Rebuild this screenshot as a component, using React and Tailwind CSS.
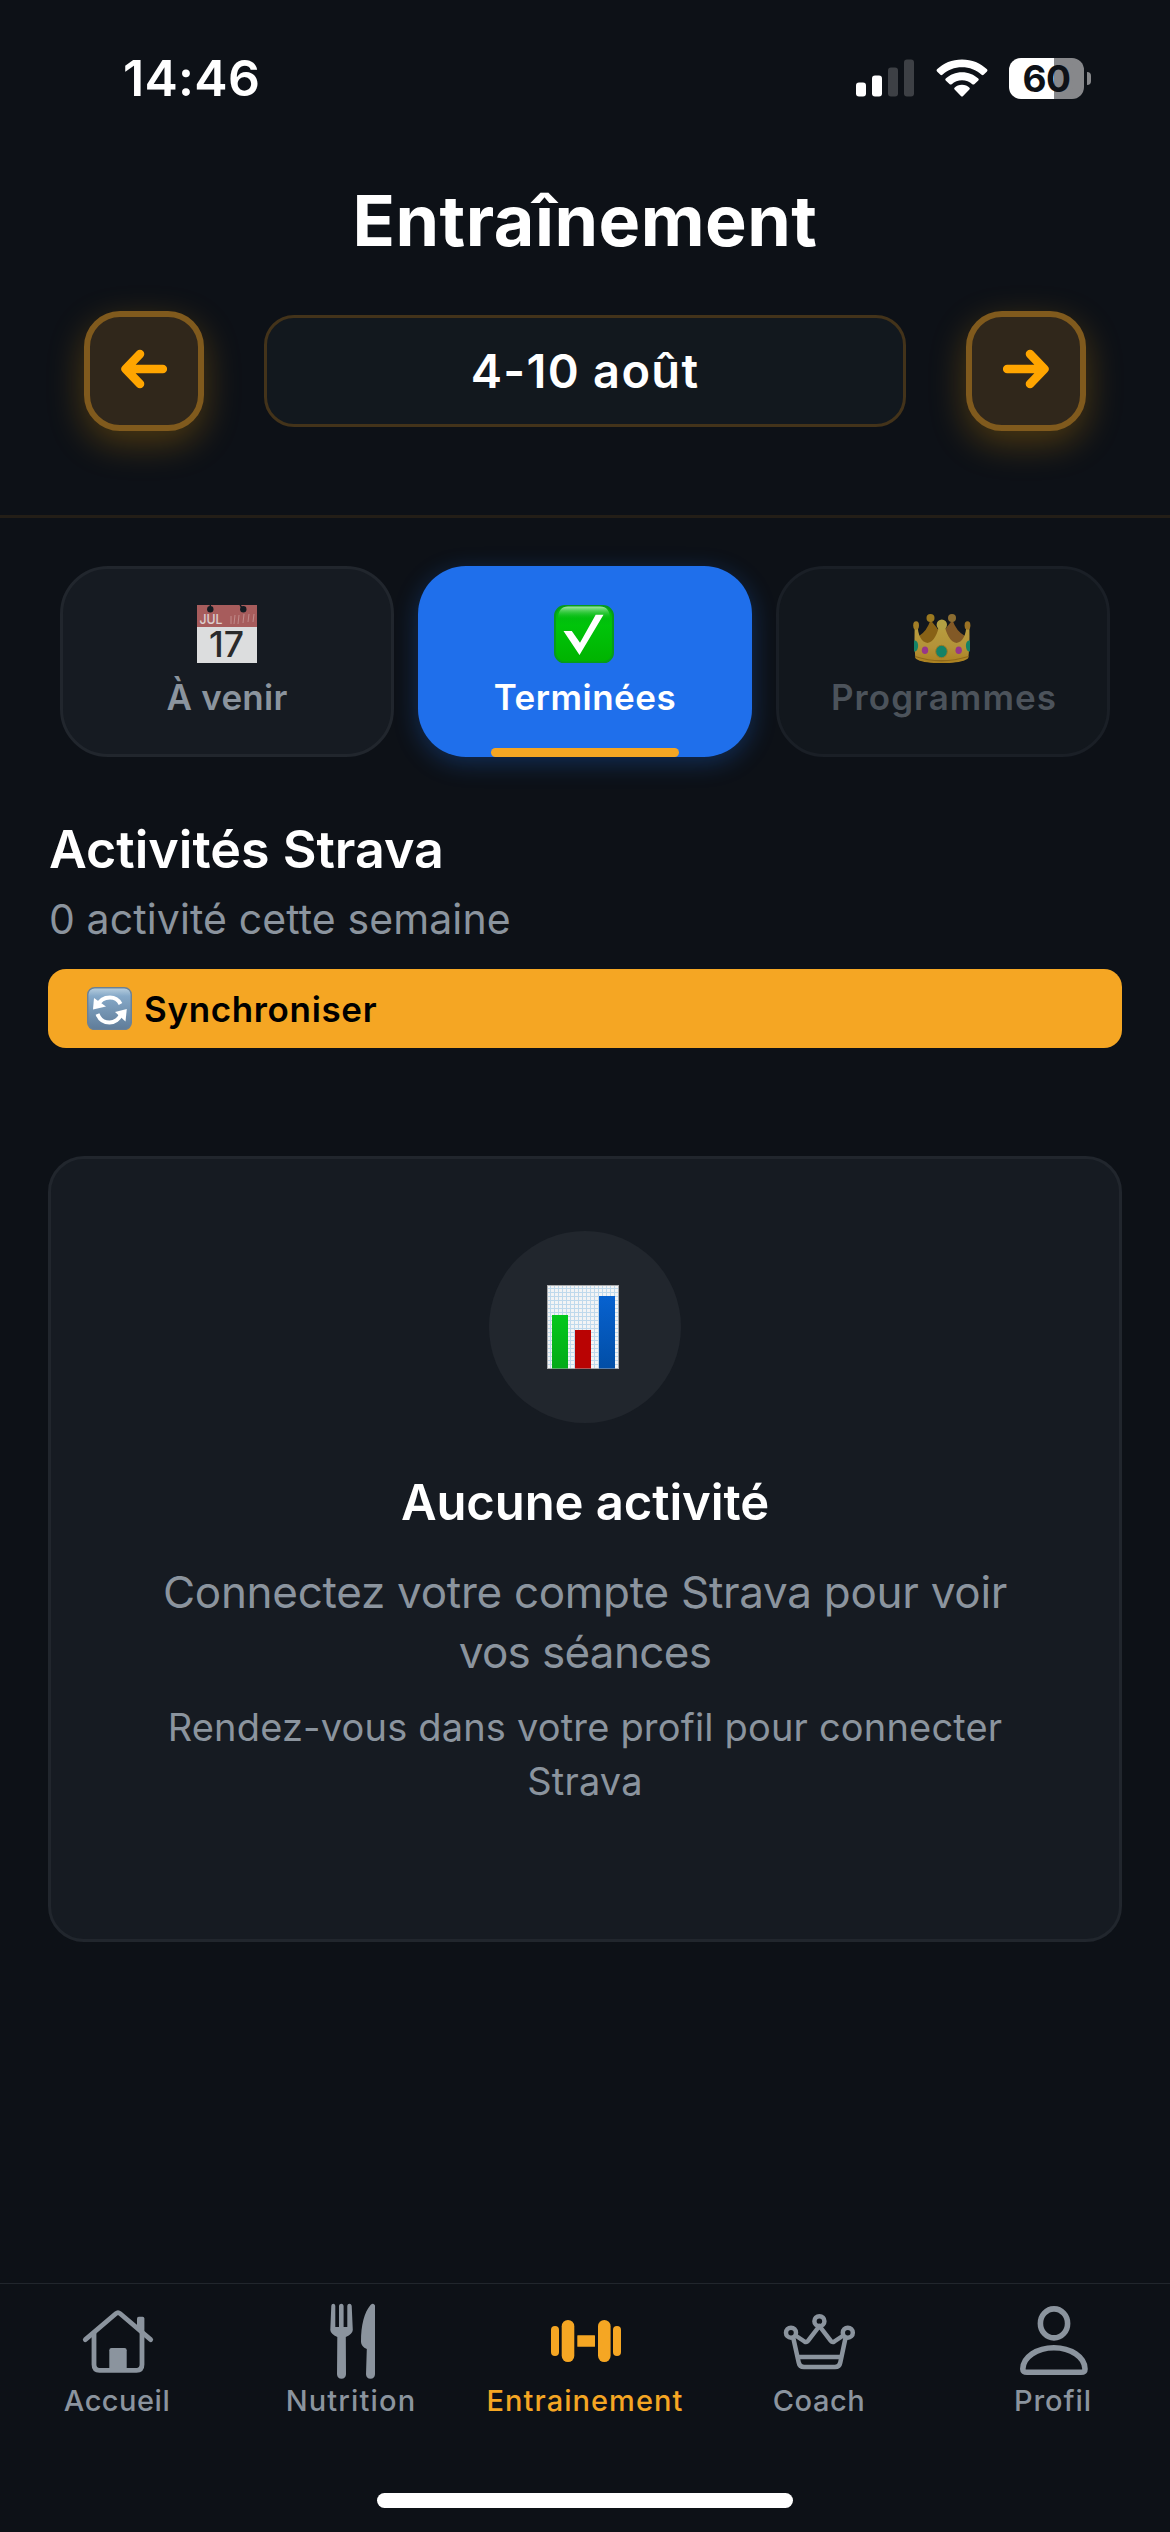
import React from "react";

function SignalIcon() {
  return (
    <svg width="58" height="38" viewBox="0 0 58 38">
      <rect x="0" y="23.5" width="10" height="14" rx="3" fill="#fff" />
      <rect x="16" y="16.5" width="10" height="21" rx="3" fill="#fff" />
      <rect x="32" y="8.5" width="10" height="29" rx="3" fill="#3d4045" />
      <rect x="48" y="0.5" width="10" height="37" rx="3" fill="#3d4045" />
    </svg>
  );
}

function WifiIcon() {
  return (
    <svg width="52" height="38" viewBox="0 0 52 38" fill="#fff">
      <path d="M26 0.5C36 0.5 44.700 4.200 51 10.300Q52 11.400 51 12.400L47.600 15.800Q46.600 16.600 45.600 15.700C40.300 10.900 33.500 8.300 26 8.300S11.700 10.900 6.400 15.700Q5.400 16.600 4.400 15.800L1 12.400Q0 11.400 1 10.300C7.300 4.200 16 0.500 26 0.500Z" />
      <path d="M26 13.200C32.300 13.200 38 15.600 42.300 19.500Q43.300 20.500 42.300 21.500L38.300 25.200Q37.300 26 36.300 25.200C33.500 22.700 30 21.200 26 21.200S18.500 22.700 15.700 25.200Q14.700 26 13.700 25.200L9.700 21.500Q8.700 20.500 9.700 19.500C14 15.600 19.700 13.200 26 13.200Z" />
      <path d="M26 25.800C29 25.800 31.700 27 33.500 28.700Q34.300 29.600 33.400 30.500L27.100 37Q26 38 24.900 37L18.600 30.500Q17.700 29.600 18.500 28.700C20.300 27 23 25.800 26 25.800Z" />
    </svg>
  );
}

function ArrowIcon({ flip }) {
  return (
    <svg width="46" height="40" viewBox="0 0 46 40" className={flip ? "-scale-x-100 -mt-1" : "-mt-1"} fill="none" stroke="#ffa500" strokeWidth="8.600" strokeLinecap="round" strokeLinejoin="round">
      <path d="M4.800 20H41.800M19 5L4.600 20L19 35" />
      <path d="M5 20L10 16V24Z" strokeWidth="4" fill="#ffa500" />
    </svg>
  );
}

function CalendarEmoji() {
  return (
    <svg width="60" height="58" viewBox="0 0 60 58" className="overflow-visible opacity-[0.88]">
      <rect width="60" height="58" fill="#f8f8f8" />
      <rect width="60" height="22" fill="#bc6665" />
      <path d="M13.300 0V4M43 0L46 4" stroke="#141c22" strokeWidth="1.400" />
      <circle cx="13.300" cy="4.300" r="3.200" fill="#141c22" />
      <circle cx="46.300" cy="4.300" r="3.200" fill="#141c22" />
      <path d="M34 11V19M38 10L37 19M42 10L41 19M47 9L46 18M52 9L51 17M57 9L56 17" stroke="#d99b9a" strokeWidth="1" />
      <text x="2.500" y="18.800" fontSize="13.500" fontWeight="500" fontFamily="Inter, sans-serif" fill="#f8e9e9" textLength="23" lengthAdjust="spacingAndGlyphs">JUL</text>
      <text x="12" y="52" fontSize="35" fontWeight="500" fontFamily="Inter, sans-serif" fill="#2d2d2d" textLength="35" lengthAdjust="spacingAndGlyphs">17</text>
    </svg>
  );
}

function CheckEmoji() {
  return (
    <svg width="60" height="58" viewBox="0 0 60 58" className="-ml-[3px]">
      <defs>
        <linearGradient id="checkBody" x2="0" y2="1">
          <stop offset="0" stopColor="#04b313" />
          <stop offset="0.350" stopColor="#00c40a" />
          <stop offset="1" stopColor="#00b300" />
        </linearGradient>
        <linearGradient id="checkShine" x2="0" y2="1">
          <stop offset="0" stopColor="#a1e8a6" />
          <stop offset="1" stopColor="#14c71e" stopOpacity="0" />
        </linearGradient>
      </defs>
      <rect x="1" y="1" width="58" height="56.500" rx="10" fill="url(#checkBody)" stroke="#079b1b" strokeWidth="2" />
      <path d="M4 14Q4 1.500 14 1.500H46Q56 1.500 56 14Z" fill="url(#checkShine)" />
      <path d="M9.500 26H17.800L26 37.800L41.700 9.700H49.500L25.500 50Z" fill="#fff" />
    </svg>
  );
}

function CrownEmoji() {
  return (
    <svg width="58" height="58" viewBox="0 0 58 58" className="-ml-[2px]">
      <defs>
        <linearGradient id="crownGold" x2="0" y2="1">
          <stop offset="0" stopColor="#f1cc4b" />
          <stop offset="0.600" stopColor="#e9bb42" />
          <stop offset="1" stopColor="#dfa420" />
        </linearGradient>
      </defs>
      <path d="M6 31Q14 26 17.500 15L28 28V40H10Z" fill="#b07c14" />
      <path d="M52 31Q43 26 39.500 15L29 28V40H48Z" fill="#a87029" />
      <circle cx="17.500" cy="13" r="4" fill="#c99a21" />
      <circle cx="39" cy="13" r="4" fill="#b48a38" />
      <path d="M1.800 20L4.500 19.500C5 30 8 37 14.500 38C21 37 25 28 26.300 19H31.300C33 28 37 37 43.500 38C50 37 53 30 53.500 19.500L56.300 20Q57 40 55.300 53C50 60 7 60 2.300 53Q1 40 1.800 20Z" fill="url(#crownGold)" />
      <circle cx="28.800" cy="19.800" r="5.200" fill="#e8ce50" />
      <ellipse cx="3.100" cy="20.500" rx="2.900" ry="4.200" fill="#d2a12a" />
      <ellipse cx="54.500" cy="20.500" rx="2.900" ry="4.200" fill="#c99127" />
      <path d="M2 51.500Q28 60 55.500 51.500" fill="none" stroke="#b88418" strokeWidth="1.300" />
      <ellipse cx="28.500" cy="46.500" rx="5.800" ry="6.200" fill="#16a67f" stroke="#c59a2a" strokeWidth="1" />
      <ellipse cx="12" cy="45.300" rx="3.200" ry="3.800" fill="#c441ae" />
      <ellipse cx="45.700" cy="45.300" rx="3.200" ry="3.800" fill="#c441ae" />
      <path d="M1 35.500C6.500 34 6.500 47 1 46.500Z" fill="#16a67f" />
      <path d="M57 35.500C51.500 34 51.500 47 57 46.500Z" fill="#16a67f" />
    </svg>
  );
}

function SyncEmoji() {
  return (
    <svg width="45" height="43" viewBox="0 0 45 43">
      <defs>
        <linearGradient id="syncBody" x2="0" y2="1">
          <stop offset="0" stopColor="#b9cfdf" />
          <stop offset="0.200" stopColor="#86a9c8" />
          <stop offset="1" stopColor="#5f7c99" />
        </linearGradient>
      </defs>
      <rect x="0.700" y="0.700" width="43.600" height="41.800" rx="7" fill="url(#syncBody)" stroke="#6b8196" strokeWidth="1.400" />
      <path d="M10.500 19C12.500 13.500 17.500 10.500 23 10.500C28 10.500 31.500 13 33.500 17" fill="none" stroke="#fff" strokeWidth="4" />
      <path d="M7 11L19 19.500L6 22.500Z" fill="#fff" />
      <path d="M34.500 26.500C32.500 32 27.500 35.500 22.500 35.500C17 35.500 12.500 32.500 10.500 27" fill="none" stroke="#fff" strokeWidth="4" />
      <path d="M39.800 22L28 25L38.500 34.500Z" fill="#fff" />
    </svg>
  );
}

function ChartEmoji() {
  return (
    <svg width="72" height="84" viewBox="0 0 72 84">
      <defs>
        <pattern id="chartGrid" width="4" height="4" patternUnits="userSpaceOnUse">
          <rect width="4" height="4" fill="#f3f4f5" />
          <path d="M0 3.500H4M3.500 0V4" stroke="#bfd9ec" strokeWidth="1" />
        </pattern>
        <linearGradient id="barGreen" x2="0" y2="1">
          <stop offset="0" stopColor="#04c81c" />
          <stop offset="1" stopColor="#04aa18" />
        </linearGradient>
        <linearGradient id="barBlue" x2="0" y2="1">
          <stop offset="0" stopColor="#0762d0" />
          <stop offset="1" stopColor="#024ea6" />
        </linearGradient>
      </defs>
      <rect x="0.500" y="0.500" width="71" height="83" fill="url(#chartGrid)" stroke="#a9abae" />
      <rect x="5" y="30" width="16" height="53.500" fill="url(#barGreen)" />
      <rect x="28" y="45" width="16" height="38.500" fill="#b90303" />
      <rect x="52" y="11" width="16" height="72.500" fill="url(#barBlue)" />
    </svg>
  );
}

function HomeIcon() {
  return (
    <svg width="80" height="80" viewBox="0 0 80 80" fill="none" stroke="currentColor" strokeWidth="4.800" strokeLinecap="round" strokeLinejoin="round">
      <path d="M8.300 38.700L39 12.500Q41 10.800 43 12.500L73.700 38.700" />
      <path d="M17 32V63.500Q17 69.300 22.500 69.300H59.500Q65 69.300 65 63.500V32" strokeLinecap="butt" />
      <path d="M32.300 69V49.200Q32.300 47 34.500 47H47.500Q49.700 47 49.700 49.200V69Z" fill="currentColor" stroke="none" />
      <path d="M60 28V17.500Q60 15.700 61.800 15.700H65.600Q67.400 15.700 67.400 17.500V34Z" fill="currentColor" stroke="none" />
    </svg>
  );
}

function UtensilsIcon() {
  return (
    <svg width="80" height="80" viewBox="0 0 80 80" fill="currentColor">
      <path d="M20.300 4.800Q20.500 2.700 22.300 2.700T24.300 4.800V26H28V4.800Q28.300 2.700 30.300 2.700T32.600 4.800V26H36.300V4.800Q36.500 2.700 38.400 2.700T40.700 4.800L41.800 29Q41.500 33 34.800 36L35 73.300Q34.700 77.700 30.500 77.700T26 73.300L26.300 36Q19.700 33 19.300 29Z" />
      <path d="M64 4.500V73.300Q63.700 77.700 59.500 77.700T55 73.300L55.800 48Q50.200 45.500 50 41C49.800 24 53.500 11 59.500 4Q62.500 1.300 64 4.500Z" />
    </svg>
  );
}

function DumbbellIcon() {
  return (
    <svg width="80" height="80" viewBox="0 0 80 80" fill="currentColor">
      <rect x="6" y="25" width="8" height="30" rx="4" />
      <rect x="16.700" y="19" width="12.600" height="42" rx="6.300" />
      <rect x="32.300" y="34.300" width="17.700" height="11.400" rx="0.500" />
      <rect x="53" y="19" width="12.600" height="42" rx="6.300" />
      <rect x="68" y="25" width="8" height="30" rx="4" />
    </svg>
  );
}

function CrownIcon() {
  return (
    <svg width="80" height="80" viewBox="0 0 80 80" fill="none" stroke="currentColor" strokeWidth="4.500" strokeLinejoin="round">
      <circle cx="12" cy="31.700" r="5" />
      <circle cx="40.400" cy="20.200" r="5" />
      <circle cx="68.800" cy="31.700" r="5" />
      <path d="M16.500 34.500L25.500 40.500Q27.500 41.700 29 39.800L40.400 25L51.800 39.800Q53.300 41.700 55.300 40.500L64.300 34.500" />
      <path d="M14.300 37L19.700 61.500Q20.500 66 25 66H56Q60.500 66 61.300 61.500L66.500 37M18.500 56H62" />
    </svg>
  );
}

function ProfileIcon() {
  return (
    <svg width="80" height="80" viewBox="0 0 80 80" fill="none" stroke="currentColor" strokeWidth="5.600" strokeLinejoin="round">
      <ellipse cx="41" cy="22.400" rx="13.600" ry="14.500" />
      <path d="M14 71.200Q9.800 71.200 9.800 68C10 56 24 46.800 40.900 46.800S71.800 56 72 68Q72 71.200 68 71.200Z" />
    </svg>
  );
}

function NavButton({ flip }) {
  return (
    <button className="flex size-[120px] items-center justify-center rounded-[36px] border-6 border-[#805a1d] bg-[#30271b] shadow-[0_12px_36px_rgba(255,165,0,0.27)]">
      <ArrowIcon flip={flip} />
    </button>
  );
}

const navItems = [
  { label: "Accueil", Icon: HomeIcon, cls: "text-[#8b949e] tracking-[0.5px]" },
  { label: "Nutrition", Icon: UtensilsIcon, cls: "text-[#8b949e] tracking-[1.15px]" },
  { label: "Entrainement", Icon: DumbbellIcon, cls: "text-[#f5a623] tracking-[1.05px]" },
  { label: "Coach", Icon: CrownIcon, cls: "text-[#8b949e] tracking-[0.6px]" },
  { label: "Profil", Icon: ProfileIcon, cls: "text-[#8b949e] tracking-[0.95px]" },
];

export default function App() {
  return (
    <div className="flex h-[2532px] w-[1170px] flex-col overflow-hidden bg-[#0d1117] font-['Inter',sans-serif] text-white">
      <header className="h-[518px] border-b-3 border-[#231e17]">
        <div className="flex h-[156px] items-center justify-between pr-[79px] pl-[123px]">
          <div className="text-[50px] leading-none font-semibold tracking-[0.3px]">14:46</div>
          <div className="flex items-center">
            <SignalIcon />
            <div className="ml-[22px]"><WifiIcon /></div>
            <div className="ml-[21px] flex h-[41px] w-[75px] items-center justify-center rounded-[12px] bg-linear-to-r from-white from-60% to-[#87888b] to-60% text-[37px] leading-none font-bold tracking-[-0.5px] text-[#0d1117]">60</div>
            <div className="ml-[3px] h-[13px] w-[4px] rounded-r-full bg-[#87888b]" />
          </div>
        </div>
        <h1 className="h-[129px] text-center text-[70px] leading-[129px] font-bold tracking-[0.5px]">Entraînement</h1>
        <div className="flex items-center justify-between px-[84px] pt-[26px]">
          <NavButton />
          <div className="flex h-[112px] w-[642px] items-center justify-center rounded-[30px] border-3 border-[#43331a] bg-[#12181e] text-[47px] font-semibold tracking-[1.3px]">4-10 août</div>
          <NavButton flip />
        </div>
      </header>

      <div className="mt-[48px] grid grid-cols-3 gap-[24px] px-[60px]">
        <button className="flex h-[191px] flex-col items-center rounded-[48px] border-3 border-[#21262d] bg-[#161b22] pt-[36px]">
          <CalendarEmoji />
          <span className="mt-[10px] text-[35px] leading-[48px] font-semibold tracking-[0.25px] text-[#8b949e]">À venir</span>
        </button>
        <button className="relative flex h-[191px] flex-col items-center rounded-[48px] bg-[#1f6feb] pt-[39px] shadow-[0_6px_24px_rgba(31,111,235,0.3)]">
          <CheckEmoji />
          <span className="mt-[10px] text-[35px] leading-[48px] font-semibold tracking-[0.5px]">Terminées</span>
          <span className="absolute bottom-0 h-[9px] w-[188px] rounded-[4.500px] bg-[#f5a623]" />
        </button>
        <button className="flex h-[191px] flex-col items-center rounded-[48px] border-3 border-[#1a1f26] bg-[#12171d] pt-[36px]">
          <div className="opacity-75"><CrownEmoji /></div>
          <span className="mt-[10px] pl-[2px] text-[35px] leading-[48px] font-semibold tracking-[1.05px] text-[#4c535b]">Programmes</span>
        </button>
      </div>

      <main className="px-[48px]">
        <h2 className="mt-[60px] pl-px text-[52px] leading-[66px] font-semibold">Activités Strava</h2>
        <p className="mt-[11px] pl-px text-[41px] leading-[50px] tracking-[0.1px] text-[#8b949e]">0 activité cette semaine</p>
        <button className="mt-[25px] flex h-[79px] w-full items-center rounded-[18px] bg-[#f5a623] pl-[39px] text-black">
          <SyncEmoji />
          <span className="mt-px ml-[12px] text-[35px] leading-none font-semibold tracking-[0.65px]">Synchroniser</span>
        </button>

        <section className="mt-[108px] flex h-[786px] flex-col items-center rounded-[36px] border-3 border-[#21262d] bg-[#161b22] pt-[72px] text-center">
          <div className="flex size-[192px] items-center justify-center rounded-full bg-[#21262d] pr-[4px]">
            <ChartEmoji />
          </div>
          <h3 className="mt-[50px] text-[49px] leading-[60px] font-semibold tracking-[-0.1px]">Aucune activité</h3>
          <p className="mt-[29px] text-[44px] leading-[60px] tracking-[-0.28px] text-[#8b949e]">Connectez votre compte Strava pour voir<br /><span className="tracking-[-0.66px]">vos séances</span></p>
          <p className="mt-[18px] text-[38px] leading-[54px] tracking-[0.18px] text-[#8b949e]">Rendez-vous dans votre profil pour connecter<br />Strava</p>
        </section>
      </main>

      <nav className="mt-auto flex h-[249px] flex-col items-center border-t border-[#21262d] pt-[17px]">
        <div className="grid w-full grid-cols-5">
          {navItems.map(({ label, Icon, cls }) => (
            <a key={label} className={"flex flex-col items-center text-[29px] leading-[36px] font-medium " + cls}>
              <Icon />
              <span className="mt-[2px]">{label}</span>
            </a>
          ))}
        </div>
        <div className="mt-[74px] h-[15px] w-[416px] rounded-full bg-white" />
      </nav>
    </div>
  );
}
